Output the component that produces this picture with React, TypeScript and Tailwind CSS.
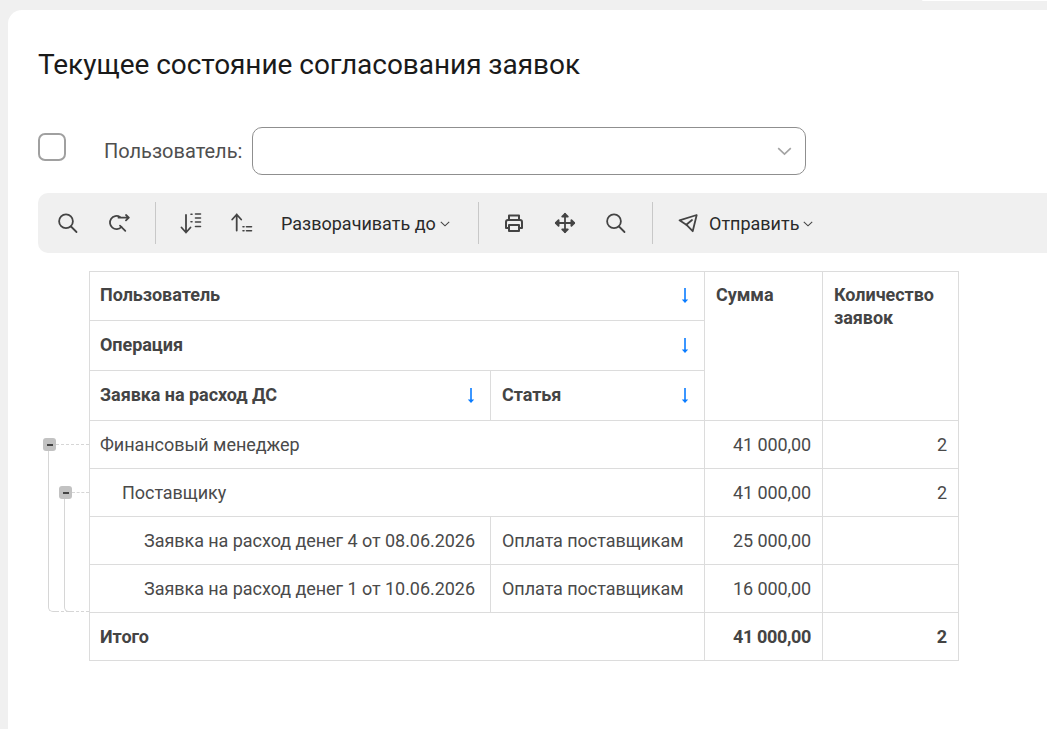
import React from "react";

const Arrow = () => (
  <svg width="8" height="17" viewBox="0 0 8 17" className="shrink-0">
    <path d="M4 1V15" stroke="#0a7cff" strokeWidth="1.6" />
    <path d="M0.8 12.6H7.2L4 16Z" fill="#0a7cff" />
  </svg>
);

const I = ({ children }: { children: React.ReactNode }) => (
  <svg width="22" height="22" viewBox="0 0 22 22" fill="none" stroke="#444" strokeWidth="1.8" strokeLinecap="round" strokeLinejoin="round" className="shrink-0">
    {children}
  </svg>
);

const Chevron = () => (
  <svg width="10" height="6" viewBox="0 0 10 6" fill="none" stroke="#444" strokeWidth="1.1" className="ml-[4px] mt-[1px]">
    <path d="M0.8 0.8L5 4.8L9.2 0.8" />
  </svg>
);

const Search = () => (
  <I>
    <circle cx="9" cy="9.3" r="6.9" />
    <path d="M14 14.5L19.5 20" />
  </I>
);

const Sep = () => <div className="w-px h-[42px] bg-[#c8c8c8] shrink-0" />;

const Toggle = () => (
  <div className="w-[13px] h-[13px] rounded-[3px] bg-[#c2c2c2] flex items-center justify-center">
    <div className="w-[6px] h-[2px] bg-[#444]" />
  </div>
);

const Head = ({ label }: { label: string }) => (
  <div className="flex items-center justify-between pr-[5px]">
    <span className="pb-[2px]">{label}</span>
    <Arrow />
  </div>
);

const th = "border border-[#dcdcdc] px-[10px] align-middle font-bold text-[#444]";
const td = "border border-[#dcdcdc] px-[10px] text-[#4a4a4a]";
const num = "border border-[#dcdcdc] px-[11px] text-right text-[#4a4a4a] tracking-[-0.1px]";

export default function App() {
  return (
    <div className="w-[1047px] h-[729px] overflow-hidden bg-[#f0f0f0] font-['Roboto',sans-serif]">
      <div className="flex justify-end h-[10px]">
        <div className="w-[125px] h-px bg-white rounded-bl-[2px]" />
      </div>
      <div className="ml-[8px] h-[719px] bg-white rounded-tl-[14px] pl-[30px] pt-[37px]">
        <h1 className="text-[28px] leading-[36px] text-[#1a1a1a] font-normal whitespace-nowrap tracking-[-0.05px]">
          Текущее состояние согласования заявок
        </h1>

        <div className="flex items-center mt-[44px] h-[48px]">
          <div className="w-[28px] h-[28px] rounded-[7px] border-[2px] border-[#a0a0a0] bg-white mb-[8px]" />
          <div className="ml-[38px] text-[20px] text-[#4f4f4f] whitespace-nowrap w-[148px]">Пользователь:</div>
          <div className="w-[554px] h-[48px] rounded-[10px] border border-[#8f8f8f] flex items-center justify-end pr-[13px]">
            <svg width="15" height="9" viewBox="0 0 15 9" fill="none" stroke="#a3a3a3" strokeWidth="1.6">
              <path d="M1.2 1.2L7.5 7.2L13.8 1.2" />
            </svg>
          </div>
        </div>

        <div className="flex items-center mt-[18px] h-[60px] w-[1040px] bg-[#f0f0f0] rounded-l-[10px] pl-[19px] text-[18px] text-[#2a2a2a]">
          <Search />
          <div className="ml-[29px]">
            <I>
              <path d="M12 4.9A6.6 6.6 0 1 0 13.4 15" />
              <path d="M12 13.7L17.3 18.8" />
              <path d="M10.5 5.7H20.6M18 3L20.8 5.7L18 8.4" />
            </I>
          </div>
          <div className="ml-[25px]"><Sep /></div>
          <div className="ml-[24px]">
            <I>
              <path d="M6 3V20.5M1.5 15.5L6 20.5L10.5 15.5" />
              <path d="M11 2.3H12M11 9.8H12M15.5 2H20.5M15.5 6H20.5M15.5 10H20.5M15.5 14.5H20.5" strokeWidth="1.6" />
            </I>
          </div>
          <div className="ml-[29px]">
            <I>
              <path d="M5.7 18.5V2.5M1.2 7.5L5.7 2.5L10.2 7.5" />
              <path d="M12 14.7H13M12 18.7H13M15.5 14.7H20.5M15.5 18.7H20.5" strokeWidth="1.6" />
            </I>
          </div>
          <div className="ml-[28px] flex items-center whitespace-nowrap w-[170px]">
            Разворачивать до
            <Chevron />
          </div>
          <div className="ml-[27px]"><Sep /></div>
          <div className="ml-[24px]">
            <I>
              <path d="M6 8V3.5H16V8" strokeWidth="2" />
              <path d="M6 16H3V10A2 2 0 0 1 5 8H17A2 2 0 0 1 19 10V16H16" strokeWidth="2" />
              <path d="M6 13H16V19H6Z" strokeWidth="2" />
            </I>
          </div>
          <div className="ml-[29px]">
            <I>
              <path d="M11 2V20M2 11H20" />
              <path d="M8.2 4.6L11 1.8L13.8 4.6Z M8.2 17.4L11 20.2L13.8 17.4Z M4.6 8.2L1.8 11L4.6 13.8Z M17.4 8.2L20.2 11L17.4 13.8Z" fill="#444" />
            </I>
          </div>
          <div className="ml-[29px]"><Search /></div>
          <div className="ml-[25px]"><Sep /></div>
          <div className="ml-[25px]">
            <I>
              <path d="M18.7 3L1.5 8.3L8.3 12.7L14.7 19.2Z" />
              <path d="M8.3 12.7L14 8" />
            </I>
          </div>
          <div className="ml-[9px] flex items-center whitespace-nowrap">
            Отправить
            <Chevron />
          </div>
        </div>

        <div className="relative mt-[18px] ml-[51px] w-[870px]">
          <table className="w-[870px] table-fixed border-collapse text-[18px] leading-[23px] tracking-[-0.05px]">
            <colgroup>
              <col className="w-[401px]" />
              <col className="w-[214px]" />
              <col className="w-[118px]" />
              <col className="w-[136px]" />
            </colgroup>
            <tbody>
              <tr className="h-[49px]">
                <td colSpan={2} className={`${th} pb-[2px]`}><Head label="Пользователь" /></td>
                <td rowSpan={3} className={`${th} !align-top pt-[11px] !px-[11px]`}>Сумма</td>
                <td rowSpan={3} className={`${th} !align-top pt-[11px] !px-[11px]`}>Количество заявок</td>
              </tr>
              <tr className="h-[50px]">
                <td colSpan={2} className={th}><Head label="Операция" /></td>
              </tr>
              <tr className="h-[50px]">
                <td className={th}><Head label="Заявка на расход ДС" /></td>
                <td className={`${th} !pl-[11px]`}><Head label="Статья" /></td>
              </tr>
              <tr className="h-[48px]">
                <td colSpan={2} className={td}>Финансовый менеджер</td>
                <td className={num}>41 000,00</td>
                <td className={num}>2</td>
              </tr>
              <tr className="h-[48px]">
                <td colSpan={2} className={td}><span className="pl-[22px]">Поставщику</span></td>
                <td className={num}>41 000,00</td>
                <td className={num}>2</td>
              </tr>
              <tr className="h-[48px]">
                <td className={`${td} whitespace-nowrap`}><span className="pl-[44px]">Заявка на расход денег 4 от 08.06.2026</span></td>
                <td className={`${td} !pl-[11px] whitespace-nowrap`}>Оплата поставщикам</td>
                <td className={num}>25 000,00</td>
                <td className={num}></td>
              </tr>
              <tr className="h-[48px]">
                <td className={`${td} whitespace-nowrap`}><span className="pl-[44px]">Заявка на расход денег 1 от 10.06.2026</span></td>
                <td className={`${td} !pl-[11px] whitespace-nowrap`}>Оплата поставщикам</td>
                <td className={num}>16 000,00</td>
                <td className={num}></td>
              </tr>
              <tr className="h-[48px] font-bold">
                <td colSpan={2} className={`${td} !text-[#444]`}>Итого</td>
                <td className={`${num} !text-[#444] !tracking-[-0.35px]`}>41 000,00</td>
                <td className={`${num} !text-[#444]`}>2</td>
              </tr>
            </tbody>
          </table>

          {/* tree outline in the left gutter, over the table's margin */}
          <div className="absolute left-[-46px] top-[167px]"><Toggle /></div>
          <div className="absolute left-[-30px] top-[215px]"><Toggle /></div>
          <div className="absolute left-[-33px] top-[173px] w-[33px] border-t border-dashed border-[#d6d6d6]" />
          <div className="absolute left-[-17px] top-[221px] w-[17px] border-t border-dashed border-[#d6d6d6]" />
          <div className="absolute left-[-41px] top-[180px] w-[8px] h-[161px] border-l border-b border-[#d6d6d6] rounded-bl-[5px]" />
          <div className="absolute left-[-25px] top-[228px] w-[8px] h-[113px] border-l border-b border-[#d6d6d6] rounded-bl-[5px]" />
          <div className="absolute left-[-33px] top-[340px] w-[33px] border-t border-dashed border-[#d6d6d6]" />
        </div>
      </div>
    </div>
  );
}
